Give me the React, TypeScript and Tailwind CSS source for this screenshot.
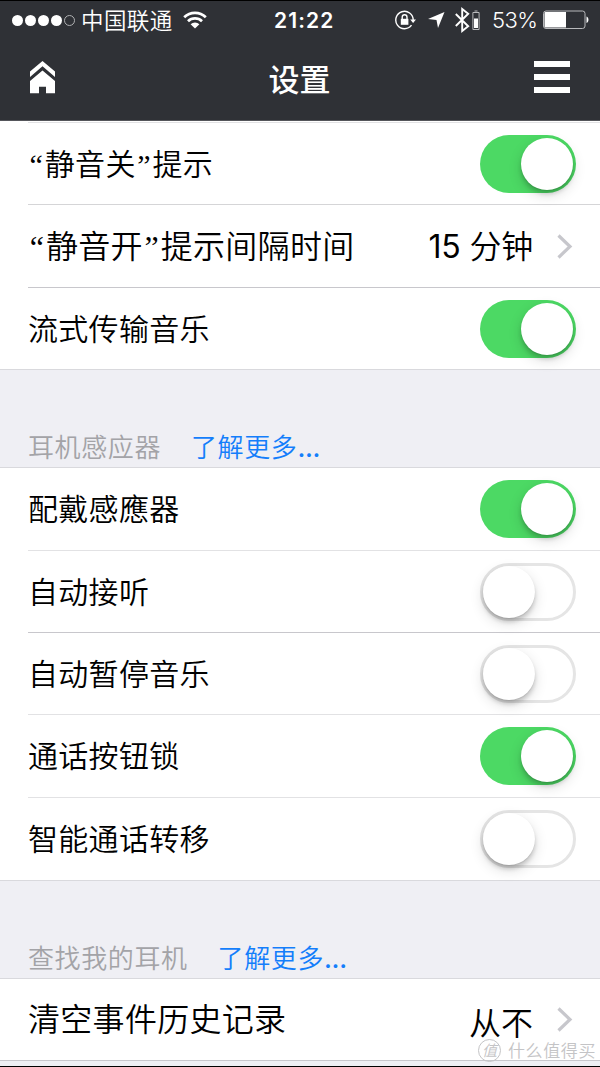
import type { ReactNode } from "react";

function StatusBar() {
  return (
    <div className="flex h-[38px] items-center pl-3">
      <div className="flex gap-[2px]">
        {[0, 1, 2, 3].map((i) => (
          <span key={i} className="h-[11px] w-[11px] rounded-full bg-white" />
        ))}
        <span className="h-[11px] w-[11px] rounded-full border border-[#b0b1b3]" />
      </div>
      <span className="ml-[6px] w-[92px] pt-px text-[22.5px] leading-[38px] tracking-[0.4px] whitespace-nowrap">中国联通</span>
      <svg className="ml-[10px]" width="24" height="18" viewBox="0 0 24 18" fill="none" stroke="white" strokeWidth="2.7">
        <path d="M1.2 6.3a15.3 15.3 0 0 1 21.6 0" />
        <path d="M5 10.3a10 10 0 0 1 14 0" />
        <path d="M12 17.5 7.6 13.2a6.3 6.3 0 0 1 8.8 0z" fill="white" stroke="none" />
      </svg>
      <span className="ml-[67px] w-[61px] pt-px text-[21px] font-semibold tracking-[1.1px] whitespace-nowrap">21:22</span>
      <svg className="ml-[60px]" width="21" height="20" viewBox="0 0 21 20" fill="none" stroke="white" strokeWidth="1.4">
        <path d="M16.5 15.2a8.7 8.7 0 1 1 1.7-5.2" />
        <path d="M15.2 9.4h5.8l-2.9 3.6z" fill="white" stroke="none" />
        <path d="M7.2 9.2V7.2a2.4 2.4 0 0 1 4.8 0v2" />
        <path d="M5.8 8.8h7.6v6H5.8z" fill="white" stroke="none" />
      </svg>
      <svg className="ml-[12px]" width="17" height="16" viewBox="0 0 17 16" fill="white">
        <path d="M16.5 0 10 16 8.5 8 0 7z" />
      </svg>
      <svg className="ml-[10px]" width="15" height="26" viewBox="0 0 15 26" fill="none" stroke="white" strokeWidth="1.9">
        <path d="m.8 7 12.4 12.2L7.2 24V2l6 4.8L.8 19" />
      </svg>
      <svg className="ml-[2px]" width="8" height="20" viewBox="0 0 8 20" fill="none" stroke="#b8b9bb">
        <path d="M.9 2.5h6.2v17H.9zM2.5 1h3" />
        <path d="M2 8.5h4V18H2z" fill="white" stroke="none" />
      </svg>
      <span className="ml-[12px] w-[46px] pt-px text-[22px] tracking-[-0.6px] whitespace-nowrap">53%</span>
      <svg className="ml-[5px] shrink-0" width="47" height="20" viewBox="0 0 47 20" fill="none">
        <rect x="0.5" y="1" width="41.5" height="17.5" rx="2.5" stroke="#b8b9bb" />
        <path d="M1.5 3a1 1 0 0 1 1-1H23v15.5H2.5a1 1 0 0 1-1-1z" fill="white" />
        <path d="M43.5 6.5c2.6 1 2.6 5.5 0 6.5z" fill="white" />
      </svg>
    </div>
  );
}

function NavBar() {
  return (
    <div className="flex h-[81px] items-start justify-between pr-[30px] pl-[30px]">
      <svg className="mt-[22px]" width="26" height="33" viewBox="0 0 26 33" fill="white">
        <path d="M12.5 0 25 10.5v5.5L12.5 5.2 0 16v-5.5z" />
        <path d="M12.5 9.5 25 20v12.3h-9v-6.5H9v6.5H0V20z" />
      </svg>
      <h1 className="mt-[19px] ml-[9px] text-[31px] leading-[44px] font-medium">设置</h1>
      <div className="mt-[22px] flex w-9 flex-col gap-[7px]">
        <span className="h-[6px] bg-white" />
        <span className="h-[6px] bg-white" />
        <span className="h-[6px] bg-white" />
      </div>
    </div>
  );
}

function Switch({ on = false }: { on?: boolean }) {
  return (
    <span
      role="switch"
      aria-checked={on}
      className={`flex h-[58px] w-24 items-center rounded-full ${
        on ? "justify-end bg-[#4cd964] pr-[3px]" : "justify-start border-[3px] border-[#e5e5e5] bg-white"
      }`}
    >
      <span className="h-[52px] w-[52px] rounded-full bg-white shadow-[0_5px_14px_rgba(0,0,0,0.14),0_4px_4px_rgba(0,0,0,0.16),0_1px_1px_rgba(0,0,0,0.08)]" />
    </span>
  );
}

function Chevron() {
  return (
    <svg width="16" height="25" viewBox="0 0 16 25" fill="none" stroke="#c7c7cc" strokeWidth="3.2">
      <path d="m1.5 1.5 11.5 11-11.5 11" />
    </svg>
  );
}

function Quoted({ children }: { children: string }) {
  return (
    <>
      <span className="inline-block w-[0.56em] text-center font-['Liberation_Serif',serif] leading-none">“</span>
      {children}
      <span className="inline-block w-[0.56em] text-center font-['Liberation_Serif',serif] leading-none">”</span>
    </>
  );
}

type RowProps = { label: ReactNode; className: string; large?: boolean; children: ReactNode };

function Row({ label, className, large = false, children }: RowProps) {
  return (
    <div className={`ml-7 flex items-center justify-between pr-6 ${className}`}>
      <span className={`pt-px whitespace-nowrap ${large ? "text-[32px] tracking-[0.3px]" : "text-[30px] tracking-[0.3px]"}`}>
        {label}
      </span>
      {children}
    </div>
  );
}

function SectionHeader({ title }: { title: string }) {
  return (
    <div className="flex h-[99px] items-end gap-[30px] border-y border-[#d9d9dd] bg-[#efeff4] pl-7 text-[26px] leading-[38px] tracking-[0.6px]">
      <span className="text-[#a3a3a7]">{title}</span>
      <a className="text-[#147efb]">
        了解更多<span className="font-medium tracking-[-0.3px]">...</span>
      </a>
    </div>
  );
}

function Value({ amount, text, className = "" }: { amount?: string; text: string; className?: string }) {
  return (
    <div className="mr-[3px] flex items-center gap-[24px]">
      <span className={`text-[32px] whitespace-nowrap ${className}`}>
        {amount && <span className="font-normal">{amount} </span>}
        {text}
      </span>
      <Chevron />
    </div>
  );
}

export default function App() {
  return (
    <main className="relative h-[1067px] w-[600px] overflow-hidden border-y border-black bg-white font-[Inter,'Noto_Sans_CJK_SC',sans-serif] font-[350] text-black">
      <header className="h-[120px] border-b border-[#55565b] bg-[#2f3136] text-white">
        <StatusBar />
        <NavBar />
      </header>

      <section className="pt-px">
        <Row
          label={<><Quoted>静音关</Quoted>提示</>}
          className="h-[83px] border-t border-b border-t-[#e2e2e4] border-b-[#d5d5d7]"
        >
          <Switch on />
        </Row>
        <Row label={<><Quoted>静音开</Quoted>提示间隔时间</>} large className="h-[83px] border-b border-[#c8c7cc]">
          <Value amount="15" text="分钟" className="pt-px tracking-[-0.2px]" />
        </Row>
        <Row label="流式传输音乐" className="h-[81px]">
          <Switch on />
        </Row>
      </section>

      <SectionHeader title="耳机感应器" />
      <section>
        <Row label="配戴感應器" className="h-[83px] border-b border-[#e2e2e4]">
          <Switch on />
        </Row>
        <Row label="自动接听" className="h-[82px] border-b border-[#c8c7cc]">
          <Switch />
        </Row>
        <Row label="自动暂停音乐" className="h-[82px] border-b border-[#e2e2e4]">
          <Switch />
        </Row>
        <Row label="通话按钮锁" className="h-[83px] border-b border-[#e2e2e4]">
          <Switch on />
        </Row>
        <Row label="智能通话转移" className="h-[82px]">
          <Switch />
        </Row>
      </section>

      <SectionHeader title="查找我的耳机" />
      <Row label="清空事件历史记录" large className="h-[81px]">
        <Value text="从不" className="pt-[8px]" />
      </Row>
      <div className="h-[7px] border-t border-[#c8c7cc] bg-[#efeff4]" />

      <div className="absolute right-[4px] bottom-[4px] flex items-center gap-[7px] text-[#c4c4c6]">
        <span className="flex h-[23px] w-[23px] items-center justify-center rounded-full border border-current text-[15px] leading-4 italic">
          值
        </span>
        <span className="text-[17px] leading-5 tracking-[0.6px]">什么值得买</span>
      </div>
    </main>
  );
}
